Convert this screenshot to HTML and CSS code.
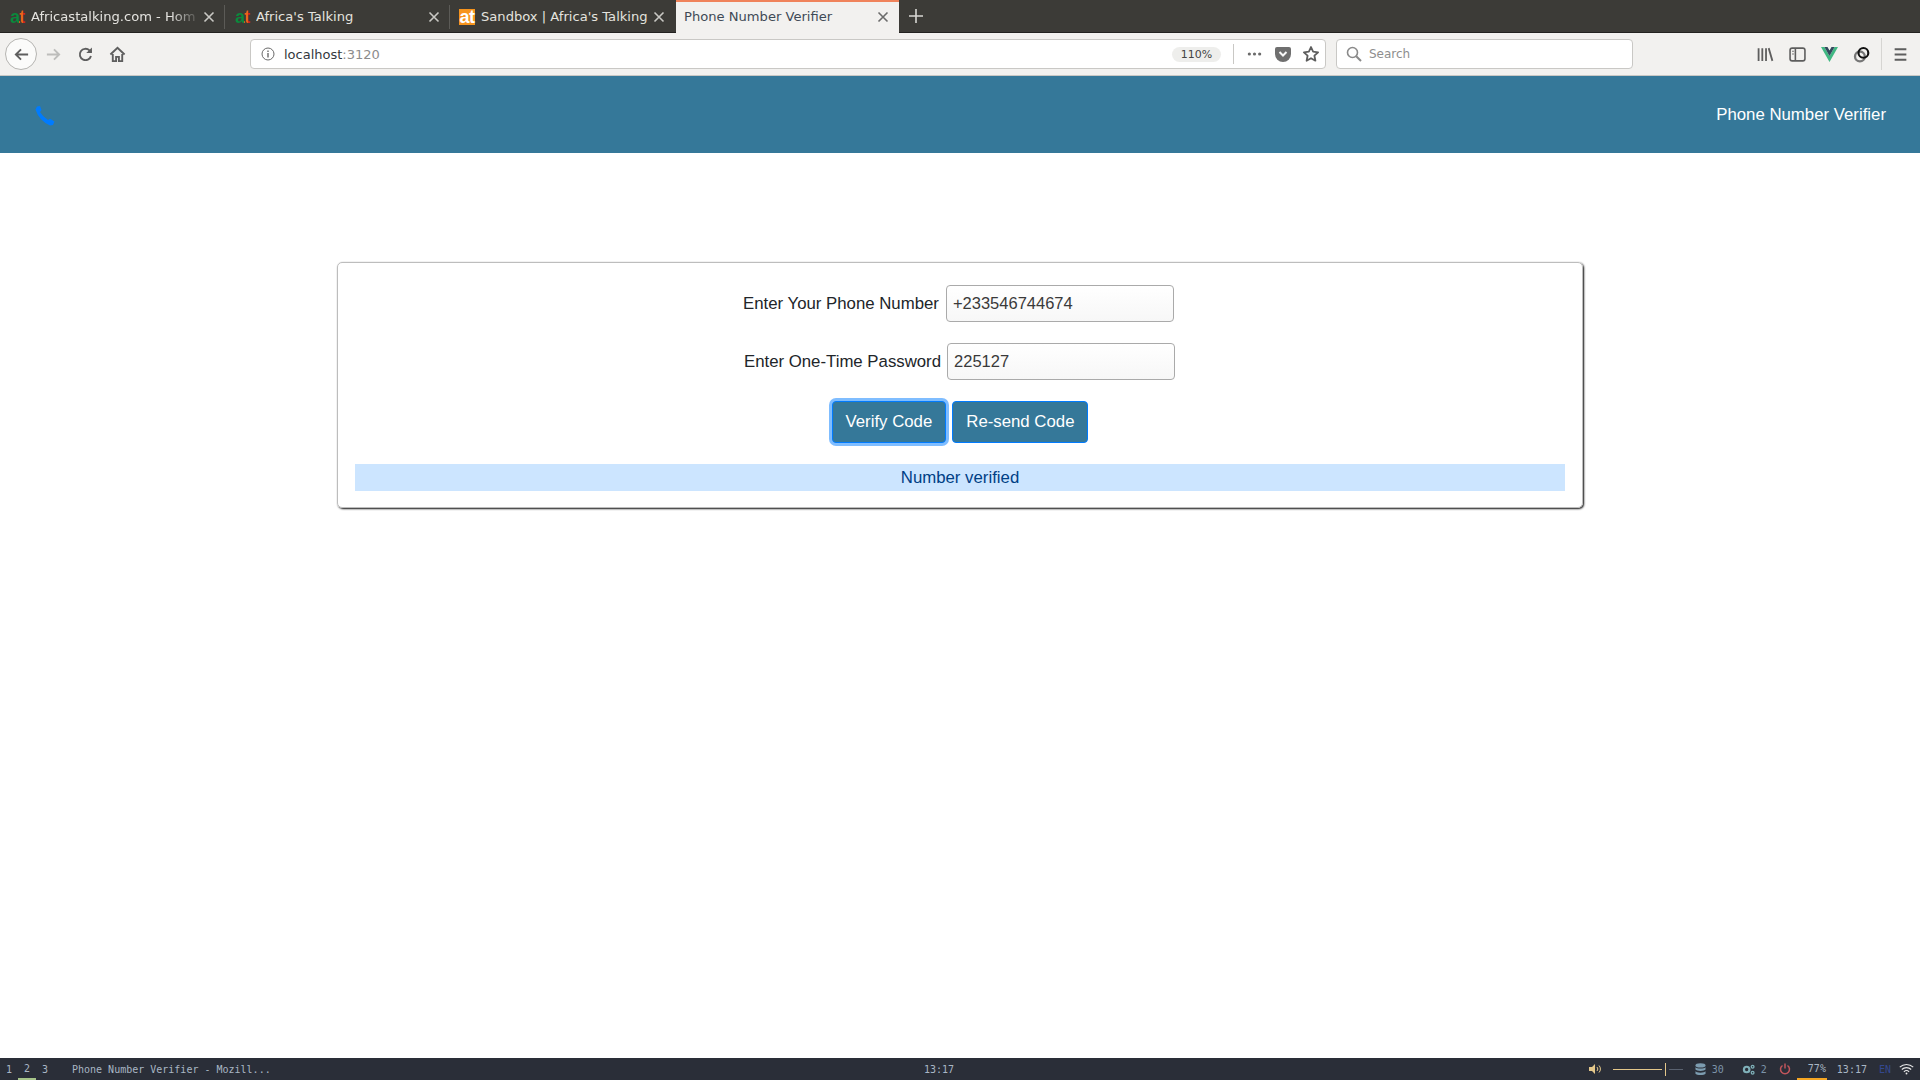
FILE: index.html
```html
<!DOCTYPE html>
<html lang="en">
<head>
    <meta charset="UTF-8">
    <title>Phone Number Verifier</title>
    <link rel="stylesheet" href="styles.css">
</head>
<body>
    <svg class="icon-defs" width="0" height="0">
        <symbol id="close" viewBox="0 0 12 12">
            <path d="M1.5 1.5l9 9M10.5 1.5l-9 9" fill="none" stroke="currentColor" stroke-width="1.6"/>
        </symbol>
    </svg>

    <!-- browser tabs -->
    <div class="tabbar">
        <div class="tab">
            <span class="favicon">at</span>
            <span class="tab-title fade">Africastalking.com - Hom</span>
            <svg class="tab-close"><use href="#close"/></svg>
        </div>
        <div class="tab">
            <span class="favicon">at</span>
            <span class="tab-title">Africa's Talking</span>
            <svg class="tab-close"><use href="#close"/></svg>
        </div>
        <div class="tab tab-sandbox">
            <span class="favicon favicon-box">at</span>
            <span class="tab-title">Sandbox | Africa's Talking</span>
            <svg class="tab-close"><use href="#close"/></svg>
        </div>
        <div class="tab tab-active">
            <span class="tab-title">Phone Number Verifier</span>
            <svg class="tab-close"><use href="#close"/></svg>
        </div>
        <svg class="new-tab" viewBox="0 0 16 16"><path d="M8 1v14M1 8h14" fill="none" stroke="currentColor" stroke-width="1.6"/></svg>
    </div>

    <!-- browser toolbar -->
    <div class="toolbar">
        <div class="nav-buttons">
            <div class="back-button">
                <svg class="tool-icon" viewBox="0 0 18 18"><path d="M16 9H3M8.500 3.500L3 9l5.500 5.500" fill="none" stroke="#5e5e5e" stroke-width="2"/></svg>
            </div>
            <div class="nav-button">
                <svg class="tool-icon" viewBox="0 0 18 18"><path d="M2 9h13M9.500 3.500L15 9l-5.500 5.500" fill="none" stroke="#bdbdbb" stroke-width="2"/></svg>
            </div>
            <div class="nav-button">
                <svg class="tool-icon" viewBox="0 0 18 18"><path d="M14.800 10.500A6 6 0 1 1 13.200 4.700L15 6.500" fill="none" stroke="#5e5e5e" stroke-width="2"/><path d="M15.800 1.500v6h-6z" fill="#5e5e5e"/></svg>
            </div>
            <div class="nav-button">
                <svg class="tool-icon" viewBox="0 0 18 18"><path d="M1.500 9L9 1.800 16.500 9" fill="none" stroke="#5e5e5e" stroke-width="2"/><path d="M4 8.500V16h3.500v-4.500h3V16H14V8.500" fill="none" stroke="#5e5e5e" stroke-width="2"/></svg>
            </div>
        </div>

        <div class="urlbar">
            <svg class="info-icon" viewBox="0 0 14 14"><circle cx="7" cy="7" r="6" fill="none" stroke="#6a6a6a" stroke-width="1"/><path d="M7 6v4.500M7 3.500v1.500" stroke="#6a6a6a" stroke-width="1.400"/></svg>
            <span class="url-host">localhost<span class="url-port">:3120</span></span>
            <span class="zoom-pill">110%</span>
            <span class="url-sep"></span>
            <svg class="dots-icon" viewBox="0 0 16 4"><circle cx="2.500" cy="2" r="1.700"/><circle cx="8" cy="2" r="1.700"/><circle cx="13.500" cy="2" r="1.700"/></svg>
            <svg class="pocket-icon" viewBox="0 0 16 15"><path d="M2 0h12a2 2 0 0 1 2 2v5a8 8 0 0 1-16 0V2a2 2 0 0 1 2-2z" fill="#6f6f6f"/><path d="M4.500 5L8 8.500 11.500 5" fill="none" stroke="#f9f9f9" stroke-width="2"/></svg>
            <svg class="star-icon" viewBox="0 0 18 18"><path d="M9 2l2.100 4.700 5 .6-3.700 3.400 1 5L9 13.200l-4.400 2.500 1-5L1.900 7.300l5-.6z" fill="none" stroke="#5e5e5e" stroke-width="1.800" stroke-linejoin="round"/></svg>
        </div>

        <div class="searchbar">
            <svg class="search-icon" viewBox="0 0 16 16"><circle cx="6.500" cy="6.500" r="5" fill="none" stroke="#8a8a8a" stroke-width="1.600"/><path d="M10.200 10.200L15 15" stroke="#8a8a8a" stroke-width="2"/></svg>
            <span class="search-text">Search</span>
        </div>

        <div class="tool-right">
            <svg class="tool-icon" viewBox="0 0 16 16"><path d="M1.500 2v12M5 2v12M8.500 2v12M11 2l3.500 12" fill="none" stroke="#5e5e5e" stroke-width="1.700"/></svg>
            <svg class="tool-icon" viewBox="0 0 16 16"><rect x="1" y="2" width="14" height="12" rx="2" fill="none" stroke="#5e5e5e" stroke-width="1.500"/><path d="M6 2v12" stroke="#5e5e5e" stroke-width="1.500"/><path d="M3 5h1.500M3 7.500h1.500" stroke="#5e5e5e"/></svg>
            <svg class="tool-icon" viewBox="0 0 16 14"><path d="M0 0l8 14 8-14h-3.200L8 8.400 3.200 0z" fill="#41b883"/><path d="M3.200 0L8 8.400 12.800 0H9.900L8 3.300 6.100 0z" fill="#34495e"/></svg>
            <svg class="tool-icon" viewBox="0 0 16 16"><circle cx="6.500" cy="9.800" r="4.600" fill="none" stroke="#777" stroke-width="2.200"/><circle cx="9.800" cy="6.500" r="4.600" fill="none" stroke="#111" stroke-width="2"/></svg>
            <span class="tool-sep"></span>
            <svg class="tool-icon" viewBox="0 0 16 16"><path d="M2.500 3h11M2.500 8h11M2.500 13h11" stroke="#5e5e5e" stroke-width="1.800"/></svg>
        </div>
    </div>

    <header class="page-head">
        <svg class="phone-icon" viewBox="0 0 20 20"><path d="M2 .5L5 0l1.500 4L5 6q2.500 4.500 8 8l2-1.200 4.500 2.700L18 19l-3 .5Q4 14.500 .5 3.500z" fill="#007bff"/></svg>
        <span class="brand">Phone Number Verifier</span>
    </header>

    <main class="page-main">
        <div class="verify-card">
            <div class="form-row row-phone">
                <label for="phone">Enter Your Phone Number</label>
                <input type="text" id="phone" value="+233546744674">
            </div>
            <div class="form-row row-otp">
                <label for="otp">Enter One-Time Password</label>
                <input type="text" id="otp" value="225127">
            </div>
            <div class="button-row">
                <button class="btn btn-focus" type="button">Verify Code</button>
                <button class="btn" type="button">Re-send Code</button>
            </div>
            <div class="alert">Number verified</div>
        </div>
    </main>

    <!-- desktop panel -->
    <footer class="panel">
        <div class="panel-left">
            <span class="workspace">1</span>
            <span class="workspace workspace-on">2</span>
            <span class="workspace">3</span>
            <span class="window-title">Phone Number Verifier - Mozill...</span>
        </div>
        <div class="panel-center">13:17</div>
        <div class="panel-right">
            <svg class="speaker" viewBox="0 0 12 12"><path d="M0 4h3l3-3v10L3 8H0z" fill="#e3c78a"/><path d="M8 4a3 3 0 0 1 0 4M10 2.500a5 5 0 0 1 0 7" fill="none" stroke="#e3c78a"/></svg>
            <span class="volume"><span class="volume-on"></span><span class="volume-knob"></span><span class="volume-off"></span></span>
            <svg class="db-icon" viewBox="0 0 12 14"><ellipse cx="6" cy="2.500" rx="5.500" ry="2.200" fill="#7c9cb0"/><path d="M.5 4.500c1 2 10 2 11 0v2.500c-1 2-10 2-11 0zM.5 9c1 2 10 2 11 0v2.500c-1 2-10 2-11 0z" fill="#7c9cb0"/></svg>
            <span class="panel-num num-db">30</span>
            <svg class="gear-icon" viewBox="0 0 14 12"><circle cx="5" cy="6" r="3" fill="none" stroke="#7fb0b8" stroke-width="2.400"/><circle cx="11.500" cy="3" r="1.500" fill="none" stroke="#7fb0b8" stroke-width="1.400"/><circle cx="11.500" cy="9.500" r="1.500" fill="none" stroke="#7fb0b8" stroke-width="1.400"/></svg>
            <span class="panel-num num-gear">2</span>
            <svg class="power-icon" viewBox="0 0 12 12"><path d="M3.500 2.500a4.500 4.500 0 1 0 5 0" fill="none" stroke="#c0555b" stroke-width="1.500"/><path d="M6 .5v5" stroke="#c0555b" stroke-width="1.500"/></svg>
            <span class="battery">77%</span>
            <span class="clock">13:17</span>
            <span class="lang">EN</span>
            <svg class="wifi-icon" viewBox="0 0 16 12"><path d="M.8 4a10.500 10.500 0 0 1 14.400 0M3 6.500a7.300 7.300 0 0 1 10 0M5.200 9a4 4 0 0 1 5.600 0" fill="none" stroke="#e8e8e8" stroke-width="1.200"/><circle cx="8" cy="10.800" r="1" fill="#e8e8e8"/></svg>
        </div>
    </footer>
</body>
</html>
```

FILE: styles.css
```css
html, body {
    height: 100%;
}

body {
    margin: 0;
    display: flex;
    flex-direction: column;
    height: 1080px;
    overflow: hidden;
    background-color: #fff;
    font-family: 'Liberation Sans', Arial, sans-serif;
}

.icon-defs {
    position: absolute;
}

/* browser tabs */
.tabbar {
    display: flex;
    align-items: stretch;
    height: 33px;
    background-color: #3c3b37;
    box-shadow: inset 0 -1px #232220;
    font-family: 'DejaVu Sans', sans-serif;
    font-size: 13.100px;
    color: #e4e3df;
    flex-shrink: 0;
}

.tab {
    display: flex;
    align-items: center;
    box-sizing: border-box;
    width: 225px;
    padding: 0 10px;
    position: relative;
}

.tab::after {
    content: "";
    position: absolute;
    top: 5px;
    bottom: 4px;
    right: 0;
    width: 1px;
    background-color: #5c5b57;
}

.tab-sandbox {
    width: 226px;
    padding-left: 9px;
    padding-right: 11px;
}

.tab-active {
    width: 223px;
    padding: 0 10px 0 8px;
    background-color: #f2f1ef;
    box-shadow: inset 0 2px #f0835b;
    color: #3f4a56;
}

.tab-sandbox::after, .tab-active::after {
    display: none;
}

.favicon {
    width: 16px;
    margin-right: 5px;
    font-family: 'Liberation Sans', sans-serif;
    font-size: 18px;
    font-weight: bold;
    line-height: 16px;
    letter-spacing: -0.500px;
    background: linear-gradient(90deg, #0a8a3c 0 55%, #e8651a 55% 80%, #d8261c 80%);
    -webkit-background-clip: text;
    background-clip: text;
    color: transparent;
}

.favicon-box {
    height: 16px;
    margin-right: 6px;
    background: #f7941d;
    color: #fff;
    text-align: center;
}

.tab-title {
    flex: 1;
    white-space: nowrap;
    overflow: hidden;
}

.fade {
    -webkit-mask-image: linear-gradient(90deg, #000 82%, transparent 100%);
    mask-image: linear-gradient(90deg, #000 82%, transparent 100%);
}

.tab-close {
    width: 12px;
    height: 12px;
    margin-left: 2px;
    color: #c9c8c4;
}

.tab-active .tab-close {
    color: #6b6b6b;
}

.new-tab {
    width: 16px;
    height: 16px;
    align-self: center;
    margin: 0 0 1px 9px;
    color: #d8d7d3;
}

/* browser toolbar */
.toolbar {
    display: flex;
    align-items: center;
    height: 43px;
    box-sizing: border-box;
    padding-left: 5px;
    background-color: #f2f1ef;
    border-bottom: 1px solid #c9c8c5;
    flex-shrink: 0;
}

.nav-buttons {
    display: flex;
    align-items: center;
    width: 245px;
}

.back-button {
    display: flex;
    align-items: center;
    justify-content: center;
    box-sizing: border-box;
    width: 32px;
    height: 32px;
    border: 1px solid #b5b4b1;
    border-radius: 50%;
    background-color: #fbfbfa;
}

.nav-button {
    display: flex;
    justify-content: center;
    width: 32px;
}

.tool-icon {
    width: 17px;
    height: 17px;
}

.urlbar, .searchbar {
    display: flex;
    align-items: center;
    box-sizing: border-box;
    height: 30px;
    background-color: #fff;
    border: 1px solid #c9c8c5;
    border-radius: 4px;
    font-family: 'DejaVu Sans', sans-serif;
    font-size: 12px;
}

.urlbar {
    width: 1076px;
    padding: 0 5px 0 10px;
}

.info-icon {
    width: 14px;
    height: 14px;
    margin-right: 9px;
}

.url-host {
    flex: 1;
    color: #33383d;
    font-size: 13px;
}

.url-port {
    color: #8c8c8c;
}

.zoom-pill {
    width: 49px;
    height: 15px;
    border-radius: 8px;
    background-color: #eeeeec;
    color: #444;
    font-size: 11px;
    line-height: 15px;
    text-align: center;
}

.url-sep {
    width: 1px;
    height: 20px;
    margin: 0 13px 0 12px;
    background-color: #c9c8c5;
}

.dots-icon {
    width: 15px;
    height: 4px;
    margin-right: 13px;
    fill: #6b6b6b;
}

.pocket-icon {
    width: 16px;
    height: 15px;
    margin-right: 11px;
}

.star-icon {
    width: 18px;
    height: 18px;
}

.searchbar {
    width: 297px;
    margin-left: 10px;
    padding-left: 9px;
}

.search-icon {
    width: 16px;
    height: 16px;
    margin-right: 7px;
}

.search-text {
    color: #8e8e8e;
}

.tool-right {
    display: flex;
    align-items: center;
    justify-content: flex-end;
    flex: 1;
    gap: 15px;
    padding-right: 11px;
}

.tool-sep {
    width: 1px;
    height: 32px;
    margin: 0 -5px 0 -4px;
    background-color: #d6d5d2;
}

/* page */
.page-head {
    display: flex;
    align-items: center;
    justify-content: space-between;
    height: 77px;
    box-sizing: border-box;
    padding: 0 34px 0 35px;
    background-color: #357899;
    flex-shrink: 0;
}

.phone-icon {
    width: 20px;
    height: 20px;
    margin-top: 3px;
}

.brand {
    color: #fff;
    font-size: 16.800px;
}

.page-main {
    flex: 1;
    padding-top: 109px;
}

.verify-card {
    display: flex;
    flex-direction: column;
    box-sizing: border-box;
    width: 1246px;
    height: 246px;
    margin: 0 auto;
    padding: 22px 17px 0;
    border: 1px solid #bdbdbd;
    border-radius: 5px;
    box-shadow: 1px 1px 2px #111;
    color: #212529;
    font-size: 16.800px;
}

.form-row {
    display: flex;
    align-items: center;
    justify-content: center;
    gap: 7px;
    height: 37px;
    margin-bottom: 21px;
    padding-right: 3px;
}

.row-otp {
    gap: 6px;
    padding-right: 1px;
}

.form-row input {
    box-sizing: border-box;
    width: 228px;
    height: 37px;
    padding: 0 6px;
    border: 1px solid #aaa;
    border-radius: 4px;
    background: linear-gradient(#fff, #f7f7f7);
    color: #3a3a3a;
    font-family: inherit;
    font-size: 16.500px;
}

.button-row {
    display: flex;
    justify-content: center;
    gap: 6px;
}

.btn {
    height: 42px;
    padding: 0 13px;
    border: 1px solid #007bff;
    border-radius: 4px;
    background-color: #357899;
    color: #fff;
    font-family: inherit;
    font-size: 16.800px;
}

.btn-focus {
    box-shadow: 0 0 0 3px rgba(0, 123, 255, 0.5);
}

.alert {
    height: 27px;
    margin-top: 21px;
    background-color: #cce5ff;
    color: #004085;
    line-height: 27px;
    text-align: center;
}

/* desktop panel */
.panel {
    display: grid;
    grid-template-columns: 1fr auto 1fr;
    align-items: center;
    height: 22px;
    background-color: #2a2e38;
    color: #a9b6c4;
    font-family: 'DejaVu Sans Mono', monospace;
    font-size: 10px;
    flex-shrink: 0;
}

.panel-left {
    display: flex;
    align-items: center;
    height: 100%;
}

.workspace {
    display: flex;
    align-items: center;
    justify-content: center;
    box-sizing: border-box;
    width: 18px;
    height: 100%;
}

.workspace-on {
    border-bottom: 2px solid #a6c48a;
}

.window-title {
    margin-left: 18px;
}

.panel-center {
    padding-right: 42px;
    text-align: center;
}

.panel-right {
    display: flex;
    align-items: center;
    justify-content: flex-end;
    height: 100%;
    padding-right: 6px;
}

.speaker {
    width: 12px;
    height: 12px;
    margin-right: 12px;
}

.volume {
    display: flex;
    align-items: center;
    margin-right: 12px;
}

.volume-on {
    width: 49px;
    height: 1px;
    background-color: #e3c78a;
}

.volume-knob {
    width: 1px;
    height: 13px;
    margin: 0 3px;
    background-color: #e3c78a;
}

.volume-off {
    width: 14px;
    height: 1px;
    background-color: #5a6270;
}

.db-icon {
    width: 11px;
    height: 13px;
    margin-right: 6px;
}

.gear-icon {
    width: 13px;
    height: 11px;
    margin-right: 6px;
}

.panel-num {
    color: #7c93a8;
}

.num-db {
    margin-right: 18px;
}

.num-gear {
    margin-right: 12px;
}

.power-icon {
    width: 12px;
    height: 12px;
    margin-right: 6px;
}

.battery {
    display: flex;
    align-items: center;
    box-sizing: border-box;
    width: 30px;
    height: 100%;
    padding-left: 11px;
    border-bottom: 2px solid #f5a623;
    white-space: nowrap;
    margin-right: 10px;
}

.clock {
    margin-right: 12px;
}

.lang {
    color: #34488f;
    margin-right: 8px;
}

.wifi-icon {
    width: 15px;
    height: 12px;
}
```
